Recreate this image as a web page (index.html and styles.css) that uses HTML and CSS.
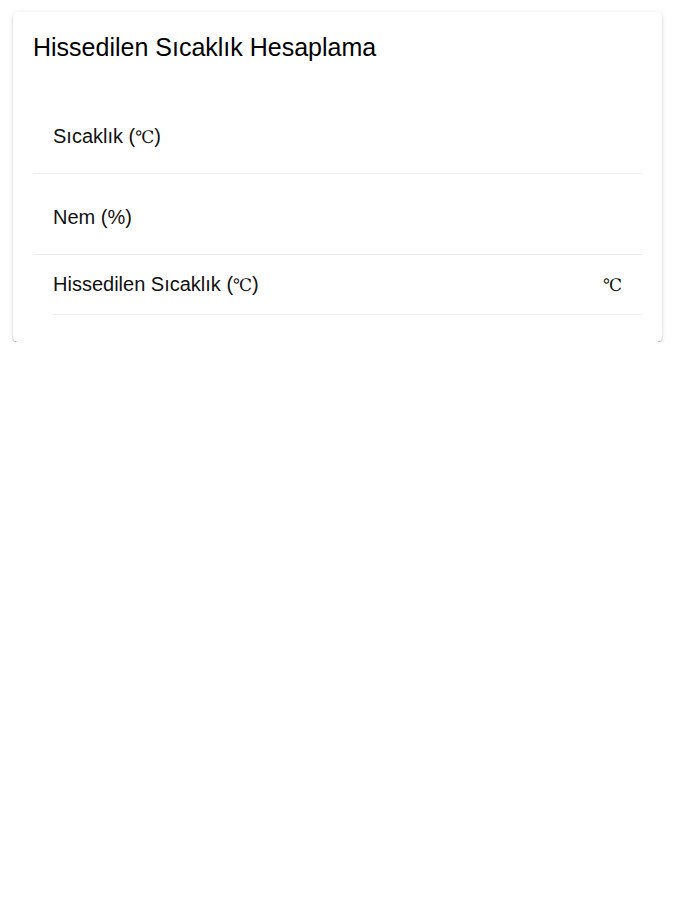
FILE: index.html
```html
<!DOCTYPE html>
<html lang="tr">
<head>
<meta charset="utf-8">
<title>Hissedilen Sıcaklık Hesaplama</title>
<link rel="stylesheet" href="styles.css">
</head>
<body>
<div class="card">
  <div class="card-header">
    <h1 class="card-title">Hissedilen Sıcaklık Hesaplama</h1>
  </div>
  <div class="card-content">
    <div class="item item-first">
      <label class="label">Sıcaklık (<span class="deg">℃</span>)</label>
    </div>
    <div class="item item-second">
      <label class="label">Nem (%)</label>
    </div>
    <div class="item item-result">
      <div class="item-inner">
        <span class="label">Hissedilen Sıcaklık (<span class="deg">℃</span>)</span>
        <span class="unit deg">℃</span>
      </div>
    </div>
  </div>
</div>
</body>
</html>
```
FILE: styles.css
```css
html, body {
  margin: 0;
  padding: 0;
  background: #ffffff;
}

body {
  font-family: "Liberation Sans", Arial, sans-serif;
  color: #000000;
}

.card {
  margin: 12px 13px 0 13px;
  padding: 0 20px 27px 20px;
  background: #ffffff;
  border-radius: 5px;
  box-shadow: 0 3px 1px -2px rgba(0, 0, 0, 0.25),
              0 2px 2px 0 rgba(0, 0, 0, 0.16),
              0 1px 5px 0 rgba(0, 0, 0, 0.12);
}

.card-header {
  padding-top: 21px;
  padding-bottom: 29px;
}

.card-title {
  margin: 0;
  font-size: 25px;
  line-height: 29px;
  font-weight: 400;
  color: #000000;
}

.card-content {
  display: flex;
  flex-direction: column;
}

.item {
  display: flex;
  align-items: center;
  font-size: 20px;
  line-height: 24px;
  color: #111;
}

.item-first {
  padding: 33px 20px 24px 20px;
  border-bottom: 1px solid #ebebeb;
}

.item-second {
  padding: 31px 20px 25px 20px;
  border-bottom: 1px solid #ebebeb;
}

.item-result {
  padding-left: 20px;
}

.item-inner {
  flex: 1;
  display: flex;
  justify-content: space-between;
  align-items: center;
  padding: 17px 20px 17px 0;
  border-bottom: 1px solid #ebebeb;
}

.deg {
  font-family: "DejaVu Serif", "Liberation Serif", serif;
  font-weight: 400;
  font-size: 17px;
}

.unit {
  color: #111;
}
```
